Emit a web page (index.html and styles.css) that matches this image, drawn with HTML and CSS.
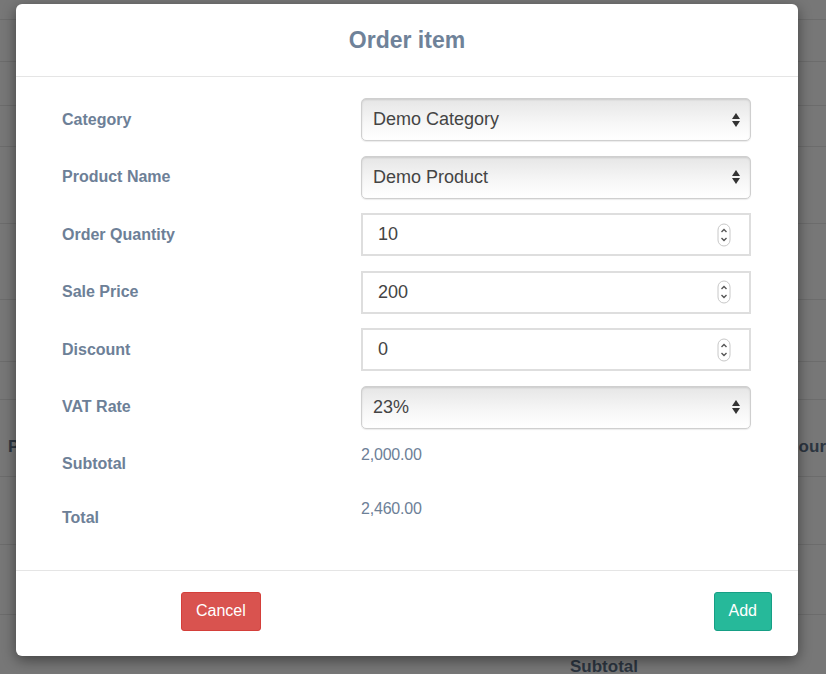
FILE: index.html
```html
<!DOCTYPE html>
<html lang="en">
<head>
    <meta charset="UTF-8">
    <meta name="viewport" content="width=device-width, initial-scale=1.0">
    <title>Order item</title>
    <link rel="stylesheet" href="styles.css">
</head>
<body>
    <!-- page behind the dialog, dimmed -->
    <div class="page">
        <div class="page-row" style="height: 20px"></div>
        <div class="page-row" style="height: 42px"></div>
        <div class="page-row" style="height: 44px"></div>
        <div class="page-row" style="height: 41px"></div>
        <div class="page-row" style="height: 77px"></div>
        <div class="page-row" style="height: 76px"></div>
        <div class="page-row" style="height: 62px"></div>
        <div class="page-row" style="height: 38px"></div>
        <div class="page-row page-row--head" style="height: 77px">
            <span>P</span>
            <span class="page-col-right">Hours</span>
        </div>
        <div class="page-row" style="height: 68px"></div>
        <div class="page-row" style="height: 70px"></div>
        <div class="page-total">Subtotal</div>
    </div>

    <div class="modal">
        <div class="modal-header">
            <h4 class="modal-title">Order item</h4>
        </div>

        <div class="modal-body">
            <div class="form-row">
                <label class="form-label">Category</label>
                <div class="control control--select">
                    <span>Demo Category</span>
                    <svg class="select-arrows" width="10" height="16" viewBox="0 0 10 16">
                        <path d="M5 1 L9 7 L1 7 Z" fill="#333" />
                        <path d="M5 15 L9 9 L1 9 Z" fill="#333" />
                    </svg>
                </div>
            </div>

            <div class="form-row">
                <label class="form-label">Product Name</label>
                <div class="control control--select">
                    <span>Demo Product</span>
                    <svg class="select-arrows" width="10" height="16" viewBox="0 0 10 16">
                        <path d="M5 1 L9 7 L1 7 Z" fill="#333" />
                        <path d="M5 15 L9 9 L1 9 Z" fill="#333" />
                    </svg>
                </div>
            </div>

            <div class="form-row">
                <label class="form-label">Order Quantity</label>
                <div class="control control--number">
                    <span>10</span>
                    <svg class="spinner" width="14" height="24" viewBox="0 0 14 24">
                        <rect x="1" y="1" width="12" height="22" rx="6" fill="#fff" stroke="#c8c8c8" />
                        <path d="M4.5 9 L7 6.5 L9.5 9" fill="none" stroke="#555" stroke-width="1.4" />
                        <path d="M4.5 15 L7 17.5 L9.5 15" fill="none" stroke="#555" stroke-width="1.4" />
                    </svg>
                </div>
            </div>

            <div class="form-row">
                <label class="form-label">Sale Price</label>
                <div class="control control--number">
                    <span>200</span>
                    <svg class="spinner" width="14" height="24" viewBox="0 0 14 24">
                        <rect x="1" y="1" width="12" height="22" rx="6" fill="#fff" stroke="#c8c8c8" />
                        <path d="M4.5 9 L7 6.5 L9.5 9" fill="none" stroke="#555" stroke-width="1.4" />
                        <path d="M4.5 15 L7 17.5 L9.5 15" fill="none" stroke="#555" stroke-width="1.4" />
                    </svg>
                </div>
            </div>

            <div class="form-row">
                <label class="form-label">Discount</label>
                <div class="control control--number">
                    <span>0</span>
                    <svg class="spinner" width="14" height="24" viewBox="0 0 14 24">
                        <rect x="1" y="1" width="12" height="22" rx="6" fill="#fff" stroke="#c8c8c8" />
                        <path d="M4.5 9 L7 6.5 L9.5 9" fill="none" stroke="#555" stroke-width="1.4" />
                        <path d="M4.5 15 L7 17.5 L9.5 15" fill="none" stroke="#555" stroke-width="1.4" />
                    </svg>
                </div>
            </div>

            <div class="form-row">
                <label class="form-label">VAT Rate</label>
                <div class="control control--select">
                    <span>23%</span>
                    <svg class="select-arrows" width="10" height="16" viewBox="0 0 10 16">
                        <path d="M5 1 L9 7 L1 7 Z" fill="#333" />
                        <path d="M5 15 L9 9 L1 9 Z" fill="#333" />
                    </svg>
                </div>
            </div>

            <div class="form-row form-row--static">
                <label class="form-label">Subtotal</label>
                <p class="static-value">2,000.00</p>
            </div>

            <div class="form-row form-row--static">
                <label class="form-label">Total</label>
                <p class="static-value">2,460.00</p>
            </div>
        </div>

        <div class="modal-footer">
            <button class="btn btn--danger">Cancel</button>
            <button class="btn btn--success">Add</button>
        </div>
    </div>
</body>
</html>
```

FILE: styles.css
```css
*{
    margin: 0;
    padding: 0;
    box-sizing: border-box;
}
html{
    background: #777777;
    font-family: "Liberation Sans", Arial, sans-serif;
}
body{
    min-height: 100vh;
    overflow: hidden;
}

/* dimmed page */
.page {
    display: flex;
    flex-direction: column;
}
.page-row {
    border-bottom: 1px solid #6c6c6c;
    display: flex;
    align-items: center;
    padding: 0 0 0 8px;
    white-space: nowrap;
}
.page-row--head {
    padding-top: 17px;
    font-weight: bold;
    font-size: 17px;
    color: #2c3540;
}
.page-col-right {
    margin-left: 767px;
}
.page-total {
    font-weight: bold;
    font-size: 17px;
    color: #2c3540;
    padding: 42px 0 0 570px;
}

/* dialog */
.modal {
    position: absolute;
    left: 16px;
    top: 4px;
    width: 782px;
    height: 652px;
    background: #ffffff;
    border-radius: 6px;
    box-shadow: 0 4px 14px rgba(0, 0, 0, 0.45);
    display: flex;
    flex-direction: column;
}
.modal-header {
    height: 73px;
    border-bottom: 1px solid #e5e5e5;
    display: flex;
    align-items: center;
    justify-content: center;
}
.modal-title {
    font-size: 23px;
    font-weight: bold;
    color: #6f8299;
    margin-top: 1px;
}
.modal-body {
    flex: 1;
    padding: 21px 47px 0 46px;
    display: flex;
    flex-direction: column;
    gap: 14.6px;
}
.form-row {
    display: flex;
    align-items: center;
}
.form-row--static {
    align-items: flex-start;
    height: 40px;
    margin-bottom: -0.6px;
}
.form-label {
    width: 299px;
    font-size: 16px;
    font-weight: bold;
    color: #6d8097;
}
.form-row--static .form-label {
    padding-top: 10px;
    line-height: 20px;
}
.static-value {
    font-size: 16px;
    line-height: 20px;
    padding-top: 1px;
    color: #6d8097;
    letter-spacing: -0.2px;
}
.control {
    width: 390px;
    height: 43px;
    display: flex;
    align-items: center;
    justify-content: space-between;
    font-size: 18px;
    color: #444;
}
.control--select {
    border: 1px solid #cfcfcf;
    border-radius: 5px;
    padding: 0 9px 0 11px;
    background: linear-gradient(to bottom, #e6e6e6, #f7f7f7 60%, #ffffff);
    box-shadow: inset 0 1px 2px rgba(0, 0, 0, 0.12), 0 1px 1px rgba(0, 0, 0, 0.08);
}
.control--number {
    border: 2px solid #dedede;
    padding: 0 18px 0 15px;
    background: #ffffff;
}

.modal-footer {
    height: 86px;
    border-top: 1px solid #e5e5e5;
    display: flex;
    align-items: center;
    justify-content: space-between;
    padding: 0 26px 5px 165px;
}
.btn {
    height: 39px;
    padding: 0 14px;
    border: 1px solid transparent;
    border-radius: 3px;
    font-family: inherit;
    font-size: 16px;
    color: #ffffff;
}
.btn--danger {
    background: #d9534f;
    border-color: #d43f3a;
}
.btn--success {
    background: #26b99a;
    border-color: #169f85;
}
```
